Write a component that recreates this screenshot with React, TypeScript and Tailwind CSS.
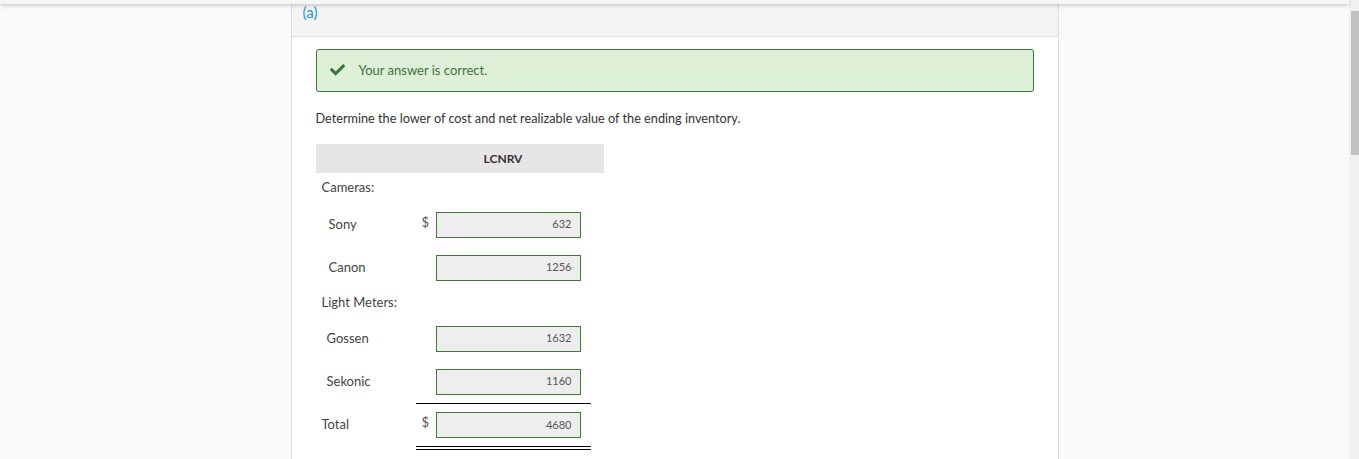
import React from "react";

const Input = ({ value }: { value: string }) => (
  <div className="w-[145px] h-[26px] bg-[#eeeeee] border border-[#3f7d37] flex items-center justify-end pr-[8px] text-[11px] text-[#555]">
    {value}
  </div>
);

const ItemRow = ({
  label,
  indent,
  value,
  dollar,
  h,
}: {
  label: string;
  indent: string;
  value: string;
  dollar?: boolean;
  h: string;
}) => (
  <div className={`flex items-center ${h}`}>
    <div className={`w-[100px] text-[13px] text-[#444] ${indent}`}>{label}</div>
    <div className="w-[20px] h-[26px] text-[13px] text-[#555] pl-[6px] leading-[20px]">
      {dollar ? "$" : ""}
    </div>
    <Input value={value} />
  </div>
);

export default function App() {
  return (
    <div
      className="flex min-h-[459px] h-[459px] overflow-hidden bg-[#fafafa]"
      style={{ fontFamily: "Lato, 'Open Sans', sans-serif" }}
    >
      <div className="flex-1 relative">
        <div className="absolute top-0 left-0 right-0 h-[4px] bg-[#f6f6f6] shadow-[0_1px_4px_rgba(0,0,0,0.25)] z-10" />
        <div className="w-[768px] mx-auto h-[459px] border-x border-[#dddddd] bg-white">
          <div className="h-[37px] bg-[#f4f4f4] border-b border-[#dddddd] pl-[11px] pt-[3px] text-[15px] leading-[18px] text-[#1b97e3]">
            (a)
          </div>
          <div className="px-[24px] pt-[12px]">
            <div className="h-[43px] bg-[#dff0d8] border border-[#3c763d] rounded-[3px] flex items-center pl-[13px]">
              <svg width="15" height="12" viewBox="0 60 512 400" className="mr-[14px] mb-[1px]">
                <path
                  d="M173.898 439.404l-166.4-166.4c-9.997-9.997-9.997-26.206 0-36.204l36.203-36.204c9.997-9.998 26.207-9.998 36.204 0L192 312.69 432.095 72.596c9.997-9.997 26.207-9.997 36.204 0l36.203 36.204c9.997 9.997 9.997 26.206 0 36.204l-294.4 294.401c-9.998 9.997-26.207 9.997-36.204-.001z"
                  fill="#3c763d"
                />
              </svg>
              <span className="text-[13px] text-[#3c763d]">Your answer is correct.</span>
            </div>
            <div className="mt-[18px] text-[12.7px] text-[#333] leading-[16px]">
              Determine the lower of cost and net realizable value of the ending inventory.
            </div>
            <div className="mt-[18px] w-[288px]">
              <div className="h-[29px] bg-[#e6e6e6] flex items-center">
                <div className="w-[100px]" />
                <div className="w-[175px] text-center text-[12px] font-bold text-[#333]">LCNRV</div>
              </div>
              <div className="h-[30px] flex items-center pl-[6px] text-[13px] text-[#444]">Cameras:</div>
              <ItemRow label="Sony" indent="pl-[13px]" value="632" dollar h="h-[43px]" />
              <ItemRow label="Canon" indent="pl-[13px]" value="1256" h="h-[43px]" />
              <div className="h-[28px] flex items-center pl-[6px] text-[13px] text-[#444]">Light Meters:</div>
              <ItemRow label="Gossen" indent="pl-[11px]" value="1632" h="h-[43px]" />
              <ItemRow label="Sekonic" indent="pl-[11px]" value="1160" h="h-[43px]" />
              <div className="ml-[100px] w-[175px] h-px bg-black" />
              <ItemRow label="Total" indent="pl-[6px]" value="4680" dollar h="h-[42px]" />
              <div className="ml-[100px] w-[175px] h-px bg-black" />
              <div className="ml-[100px] w-[175px] h-px bg-black mt-[2px]" />
            </div>
          </div>
        </div>
      </div>
      <div className="w-[10px] bg-[#f1f1f1] pt-[11px] pl-[2px]">
        <div className="h-[144px] bg-[#c1c1c1]" />
      </div>
    </div>
  );
}
